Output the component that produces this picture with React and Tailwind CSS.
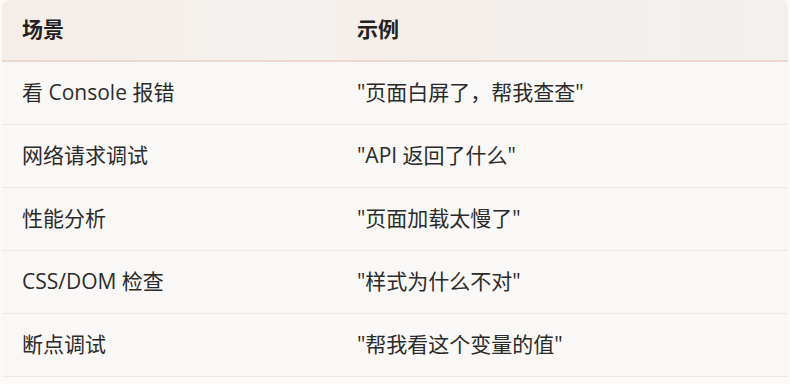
const rows = [
  ["看 Console 报错", "\"页面白屏了，帮我查查\""],
  ["网络请求调试", "\"API 返回了什么\""],
  ["性能分析", "\"页面加载太慢了\""],
  ["CSS/DOM 检查", "\"样式为什么不对\""],
  ["断点调试", "\"帮我看这个变量的值\""],
];

export default function App() {
  return (
    <div
      className="w-[790px] h-[384px] bg-[#fbfaf9] px-[2px] overflow-hidden text-[21px] text-[#2b2b2b]"
      style={{ fontFamily: '"Open Sans", "Noto Sans CJK SC", sans-serif' }}
    >
      <div className="grid grid-cols-[335px_1fr] h-[62px] border-b-2 border-[#ecd8cf] rounded-t-[8px] overflow-hidden">
        <div className="flex items-center pl-[20px] font-bold text-[#222] bg-gradient-to-r from-[#f5ede8] to-[#f4f2ef]">
          场景
        </div>
        <div className="flex items-center pl-[20px] font-bold text-[#222] bg-gradient-to-r from-[#f5eeea] to-[#f2f1ee]">
          示例
        </div>
      </div>
      {rows.map(([a, b]) => (
        <div
          key={a}
          className="grid grid-cols-[335px_1fr] h-[63px] border-b border-[#ebe8e5] bg-[#faf8f6]"
        >
          <div className="flex items-center pl-[20px]">{a}</div>
          <div className="flex items-center pl-[20px]">{b}</div>
        </div>
      ))}
    </div>
  );
}
